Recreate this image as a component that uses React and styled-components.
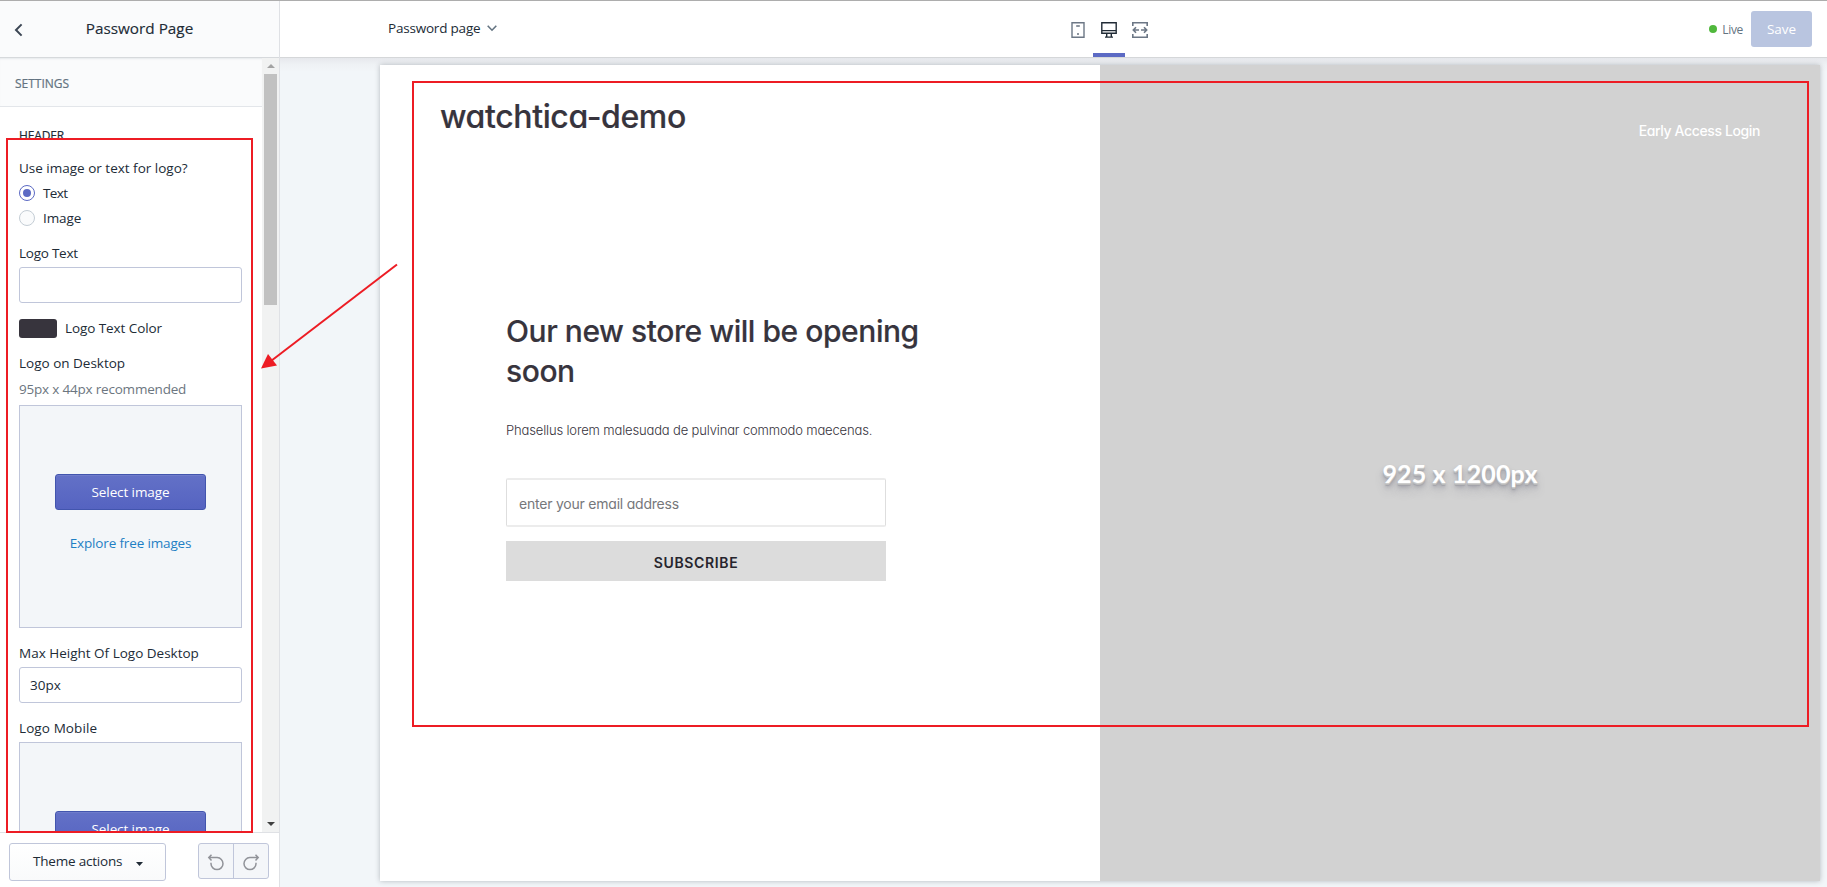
import React from "react";
import styled, { createGlobalStyle } from "styled-components";

const GlobalStyle = createGlobalStyle`
  *, *::before, *::after { box-sizing: border-box; }
  body { margin: 0; overflow: hidden; }
  button, input { font: inherit; }
`;

const ui = `"Open Sans", "Noto Sans", sans-serif`;
const store = `Inter, Lato, sans-serif`;

const Editor = styled.div`
  position: relative;
  display: grid;
  grid-template-columns: 280px 1fr;
  width: 1827px;
  height: 887px;
  border-top: 1px solid #adadad;
  background: #f2f6f9;
  color: #212b36;
  font: 13.5px/20px ${ui};
  white-space: nowrap;
  overflow: hidden;
`;

const Label = styled.span`
  letter-spacing: ${(p) => p.$track || 0}px;
  color: ${(p) => p.$color || "inherit"};
`;

/* Sidebar */
const Sidebar = styled.aside`
  display: flex;
  flex-direction: column;
  height: 886px;
  border-right: 1px solid #dfe1e5;
  background: #fff;
`;

const SidebarHeader = styled.header`
  display: flex;
  align-items: center;
  height: 57px;
  flex: none;
  padding: 0 38px 0 14px;
  background: #fafbfc;
  border-bottom: 1px solid #d6d9dc;
`;

const BackButton = styled.button`
  display: flex;
  padding: 2px 0 0;
  border: 0;
  background: none;
`;

const SidebarTitle = styled.h1`
  flex: 1;
  margin: 0 0 2px 14px;
  text-align: center;
  font-size: 15.3px;
  font-weight: 500;
  line-height: 22px;
  -webkit-text-stroke: 0.15px currentColor;
`;

const ScrollArea = styled.div`
  display: grid;
  grid-template-columns: 1fr 17px;
  flex: 1;
  min-height: 0;
  overflow: hidden;
`;

const Panel = styled.div`
  height: 774px;
  overflow: hidden;
`;

const SectionBand = styled.div`
  height: 49px;
  padding: 16px 15px 0;
  border-bottom: 1px solid #e3e6ea;
  background: #fafbfc;
  box-shadow: inset 0 2px 2px -1px #e6e9ec;
  color: #637381;
  font-size: 12px;
  font-weight: 500;
  -webkit-text-stroke: 0.2px currentColor;
`;

const Fields = styled.div`
  display: flex;
  flex-direction: column;
  padding: 19px 20px 0 19px;
`;

const GroupTitle = styled.h2`
  margin: 0 0 12px;
  font-size: 12px;
  font-weight: 500;
  line-height: 20px;
  letter-spacing: -0.15px;
  -webkit-text-stroke: 0.2px currentColor;
`;

const Field = styled.div`
  display: flex;
  flex-direction: column;
  gap: ${(p) => p.$gap ?? 4}px;
  margin-bottom: ${(p) => p.$after ?? 15}px;
`;

const RadioList = styled.div`
  display: flex;
  flex-direction: column;
  gap: 1px;
`;

const RadioRow = styled.label`
  display: flex;
  align-items: center;
  gap: 8px;
  height: 24px;
`;

const RadioDot = styled.span`
  display: grid;
  place-items: center;
  width: 16px;
  height: 16px;
  border: 1px solid ${(p) => (p.$on ? "#5c6ac4" : "#c4cdd5")};
  border-radius: 50%;
  background: ${(p) => (p.$on ? "#fff" : "#fafbfc")};
  &::after {
    content: "";
    width: 8px;
    height: 8px;
    border-radius: 50%;
    background: ${(p) => (p.$on ? "#5c6ac4" : "transparent")};
  }
`;

const TextInput = styled.input`
  width: 100%;
  height: 36px;
  padding: 0 10px;
  border: 1px solid #c0c6da;
  border-radius: 3px;
  background: #fff;
  color: #212b36;
`;

const SwatchRow = styled.div`
  display: flex;
  align-items: flex-start;
  gap: 8px;
  height: 19px;
  margin-bottom: 15px;
  line-height: 18px;
`;

const Swatch = styled.span`
  width: 38px;
  height: 19px;
  border-radius: 3px;
  background: #37343d;
`;

const ImagePicker = styled.div`
  display: flex;
  flex-direction: column;
  align-items: center;
  gap: 23px;
  height: 223px;
  padding-top: 68px;
  border: 1px solid #c0c6da;
  background: #f3f6f9;
`;

const PrimaryButton = styled.button`
  width: 151px;
  height: 36px;
  padding: 0 0 1px;
  border: 1px solid #4255ae;
  border-radius: 3px;
  background: linear-gradient(#6371c7, #5563c1);
  box-shadow: inset 0 1px 0 #6f7ccb;
  color: #fff;
  font-weight: 500;
  letter-spacing: -0.1px;
`;

const ScrollTrack = styled.div`
  display: flex;
  flex-direction: column;
  align-items: center;
  padding: 6px 0;
  background: #f1f2f2;
`;

const ScrollThumb = styled.div`
  width: 13px;
  height: 231px;
  margin-top: 6px;
  margin-bottom: auto;
  background: #c1c1c1;
`;

const Footer = styled.footer`
  display: flex;
  justify-content: space-between;
  align-items: flex-start;
  height: 55px;
  flex: none;
  padding: 10px 10px 0 9px;
  border-top: 1px solid #dfe1e5;
`;

const ThemeButton = styled.button`
  display: flex;
  align-items: center;
  gap: 14px;
  width: 157px;
  height: 38px;
  padding: 0 0 2px 23px;
  border: 1px solid #c0c6da;
  border-radius: 3px;
  background: linear-gradient(#fff, #f9fafb);
  color: #212b36;
`;

const CaretSlot = styled.svg`
  margin-top: 6px;
`;

const HistoryGroup = styled.div`
  display: flex;
  width: 71px;
  height: 36px;
  border: 1px solid #c0c6da;
  border-radius: 3px;
  background: #f4f6f9;
`;

const HistoryButton = styled.button`
  display: grid;
  place-items: center;
  flex: 1;
  padding: 2px 0 0;
  border: 0;
  background: none;
  & + & { border-left: 1px solid #c0c6da; }
`;

/* Main column */
const Main = styled.main`
  display: flex;
  flex-direction: column;
  min-width: 0;
`;

const TopBar = styled.header`
  display: grid;
  grid-template-columns: 675px auto 1fr;
  height: 57px;
  flex: none;
  padding: 0 15px 0 108px;
  border-bottom: 1px solid #d5d7d9;
  background: #fff;
`;

const PageSelect = styled.div`
  display: flex;
  align-items: center;
  gap: 7px;
  height: 20px;
  margin-top: 17px;
`;

const Devices = styled.nav`
  display: flex;
  height: 56px;
`;

const Device = styled.button`
  display: flex;
  justify-content: center;
  width: ${(p) => p.$width}px;
  padding: 21px 0 0;
  border: 0;
  border-bottom: 4px solid ${(p) => (p.$active ? "#5c6ac4" : "transparent")};
  background: none;
`;

const Actions = styled.div`
  display: flex;
  justify-content: flex-end;
  align-items: center;
  height: 36px;
  margin-top: 10px;
`;

const LiveDot = styled.span`
  width: 8px;
  height: 8px;
  margin-right: 5px;
  border-radius: 50%;
  background: #50b83c;
`;

const LiveText = styled.span`
  margin: 2px 8px 0 0;
  color: #637381;
  font-size: 12px;
  letter-spacing: -0.35px;
`;

const SaveButton = styled.button`
  width: 61px;
  height: 36px;
  padding: 0 0 1px;
  border: 0;
  border-radius: 3px;
  background: #b9c5e0;
  color: #fff;
`;

const Canvas = styled.div`
  flex: 1;
  padding: 7px 7px 6px 100px;
  background: linear-gradient(#e6e8ec, #eef1f4 6px, #f2f6f9 14px);
`;

const Preview = styled.section`
  display: grid;
  grid-template-columns: 720px 720px;
  height: 816px;
  background: #fff;
  box-shadow: 0 0 5px rgba(50, 55, 65, 0.32);
  color: #37343d;
  font-family: ${store};
  font-feature-settings: "cv11";
`;

const StoreSide = styled.div`
  padding: 32px 0 0 60px;
`;

const StoreName = styled.div`
  font-size: 32px;
  font-weight: 500;
  line-height: 40px;
  letter-spacing: -0.38px;
  -webkit-text-stroke: 0.2px currentColor;
`;

const Signup = styled.div`
  display: flex;
  flex-direction: column;
  width: 420px;
  padding: 174px 0 0 66px;
`;

const Headline = styled.h2`
  width: 430px;
  margin: 0 0 29px;
  white-space: normal;
  font-size: 30px;
  font-weight: 500;
  line-height: 40px;
  letter-spacing: -0.45px;
  -webkit-text-stroke: 0.15px currentColor;
`;

const Lead = styled.p`
  margin: 0 0 38px;
  font-size: 13px;
  font-weight: 350;
  line-height: 20px;
  letter-spacing: -0.15px;
`;

const EmailInput = styled.input`
  width: 380px;
  height: 49px;
  margin-bottom: 14px;
  padding: 2px 12px 0;
  border: 1px solid #dedede;
  border-width: 2px 1px;
  border-top-color: #ececec;
  border-bottom-color: #ececec;
  border-radius: 2px;
  font-size: 14px;
  letter-spacing: -0.22px;
  &::placeholder { color: #76777b; opacity: 1; }
`;

const SubscribeButton = styled.button`
  width: 380px;
  height: 40px;
  padding: 3px 0 0;
  border: 0;
  background: #dcdcdc;
  color: #26242c;
  font-size: 14px;
  font-weight: 600;
  letter-spacing: 0.65px;
`;

const ImageSide = styled.div`
  display: flex;
  flex-direction: column;
  background: #d2d2d2;
  color: #fff;
`;

const LoginLink = styled.a`
  align-self: flex-end;
  margin: 56px 60px 0 0;
  font-size: 14px;
  font-weight: 500;
  line-height: 20px;
  letter-spacing: -0.38px;
`;

const ImageSize = styled.div`
  margin-top: 312px;
  text-align: center;
  font: 700 25px/40px Lato, sans-serif;
  letter-spacing: 0.15px;
  text-shadow: 0 1px 0 #ccc, 0 2px 0 #bbb, 0 3px 1px #a4a4aa,
    0 4px 4px rgba(90, 90, 110, 0.4), 0 8px 10px rgba(90, 90, 110, 0.25);
`;

/* Annotations drawn over the editor */
const Highlight = styled.div`
  position: absolute;
  left: ${(p) => p.$x}px;
  top: ${(p) => p.$y}px;
  width: ${(p) => p.$w}px;
  height: ${(p) => p.$h}px;
  border: 2px solid #ed1c24;
  pointer-events: none;
`;

const Arrow = styled.svg`
  position: absolute;
  left: 260px;
  top: 262px;
  pointer-events: none;
`;

const Triangle = ({ up, color }) => (
  <svg width="8" height="4" viewBox="0 0 8 4">
    <path d={up ? "M0 4 4 0 8 4Z" : "M0 0 4 4 8 0Z"} fill={color} />
  </svg>
);

const UndoIcon = ({ flip }) => (
  <svg width="18" height="17" viewBox="0 0 18 17" fill="none" stroke="#919399" strokeWidth="1.5" transform={flip ? "scale(-1 1)" : undefined}>
    <path d="M4.5 .8 1.8 3.6 4.5 6.4M1.8 3.6H10.2A6 6 0 1 1 4 9.7V8.7" />
  </svg>
);

const Picker = ({ link }) => (
  <ImagePicker>
    <PrimaryButton>Select image</PrimaryButton>
    {link && <Label $track={-0.15} $color="#1f7fc4">{link}</Label>}
  </ImagePicker>
);

export default function App() {
  return (
    <Editor>
      <GlobalStyle />
      <Sidebar>
        <SidebarHeader>
          <BackButton aria-label="Back">
            <svg width="10" height="14" viewBox="0 0 10 14" fill="none" stroke="#3c4654" strokeWidth="2">
              <path d="M7.6 1.4 2 7l5.6 5.6" />
            </svg>
          </BackButton>
          <SidebarTitle>Password Page</SidebarTitle>
        </SidebarHeader>
        <ScrollArea>
          <Panel>
            <SectionBand>SETTINGS</SectionBand>
            <Fields>
              <GroupTitle>HEADER</GroupTitle>
              <Field $gap={3} $after={13}>
                <Label>Use image or text for logo?</Label>
                <RadioList>
                  <RadioRow><RadioDot $on /><Label $track={-0.6}>Text</Label></RadioRow>
                  <RadioRow><RadioDot /><Label $track={-0.1}>Image</Label></RadioRow>
                </RadioList>
              </Field>
              <Field $after={16}>
                <Label $track={-0.25}>Logo Text</Label>
                <TextInput defaultValue="" />
              </Field>
              <SwatchRow><Swatch /><Label $track={-0.08}>Logo Text Color</Label></SwatchRow>
              <Field $gap={6}>
                <Label>Logo on Desktop</Label>
                <Label $track={-0.2} $color="#6c7680">95px x 44px recommended</Label>
                <Picker link="Explore free images" />
              </Field>
              <Field>
                <Label>Max Height Of Logo Desktop</Label>
                <TextInput defaultValue="30px" />
              </Field>
              <Field>
                <Label $track={0.1}>Logo Mobile</Label>
                <Picker />
              </Field>
            </Fields>
          </Panel>
          <ScrollTrack>
            <Triangle up color="#a3a3a3" />
            <ScrollThumb />
            <Triangle color="#404040" />
          </ScrollTrack>
        </ScrollArea>
        <Footer>
          <ThemeButton>
            <Label $track={-0.2}>Theme actions</Label>
            <CaretSlot width="7" height="4" viewBox="0 0 7 4"><path d="M0 0H7L3.5 4Z" fill="#212b36" /></CaretSlot>
          </ThemeButton>
          <HistoryGroup>
            <HistoryButton aria-label="Undo"><UndoIcon /></HistoryButton>
            <HistoryButton aria-label="Redo"><UndoIcon flip /></HistoryButton>
          </HistoryGroup>
        </Footer>
      </Sidebar>

      <Main>
        <TopBar>
          <PageSelect>
            <Label $track={-0.2}>Password page</Label>
            <svg width="10" height="7" viewBox="0 0 10 7" fill="none" stroke="#637381" strokeWidth="1.6">
              <path d="M.7 .8 5 5.2 9.3 .8" />
            </svg>
          </PageSelect>
          <Devices>
            <Device $width={30} aria-label="Mobile">
              <svg width="14" height="16" viewBox="0 0 14 16" fill="none" stroke="#6c7785" strokeWidth="1.4">
                <path d="M1 .8H13V15.2H1Z" />
                <path d="M5.2 4H8.8M6 12H8" strokeWidth="1.8" stroke="#8d959f" />
              </svg>
            </Device>
            <Device $width={32} $active aria-label="Desktop">
              <svg width="16" height="16" viewBox="0 0 16 16" fill="none" stroke="#212b36" strokeWidth="1.4">
                <path d="M.8 .8H15.2V11.2H.8ZM1 8.6H15M5.7 11V15M10.3 11V15M4 15.1H12" />
              </svg>
            </Device>
            <Device $width={30} aria-label="Full width">
              <svg width="16" height="16" viewBox="0 0 16 16" fill="none" stroke="#6c7785" strokeWidth="1.6">
                <path d="M.8 4V.8H15.2V4M.8 12V15.2H15.2V12M1.4 8H7M9 8H14.6M4 5.2 1.3 8 4 10.8M12 5.2 14.7 8 12 10.8" />
              </svg>
            </Device>
          </Devices>
          <Actions>
            <LiveDot />
            <LiveText>Live</LiveText>
            <SaveButton>Save</SaveButton>
          </Actions>
        </TopBar>
        <Canvas>
          <Preview>
            <StoreSide>
              <StoreName>watchtica-demo</StoreName>
              <Signup>
                <Headline>Our new store will be opening soon</Headline>
                <Lead>Phasellus lorem malesuada de pulvinar commodo maecenas.</Lead>
                <EmailInput placeholder="enter your email address" />
                <SubscribeButton>SUBSCRIBE</SubscribeButton>
              </Signup>
            </StoreSide>
            <ImageSide>
              <LoginLink>Early Access Login</LoginLink>
              <ImageSize>925 x 1200px</ImageSize>
            </ImageSide>
          </Preview>
        </Canvas>
      </Main>

      <Highlight $x={6} $y={137} $w={247} $h={695} />
      <Highlight $x={412} $y={80} $w={1397} $h={646} />
      <Arrow width="140" height="110" viewBox="0 0 140 110">
        <path d="M137 1.5 11 98" stroke="#ed1c24" strokeWidth="2" />
        <path d="M1 105.5 8 91 17 102.5Z" fill="#ed1c24" />
      </Arrow>
    </Editor>
  );
}
